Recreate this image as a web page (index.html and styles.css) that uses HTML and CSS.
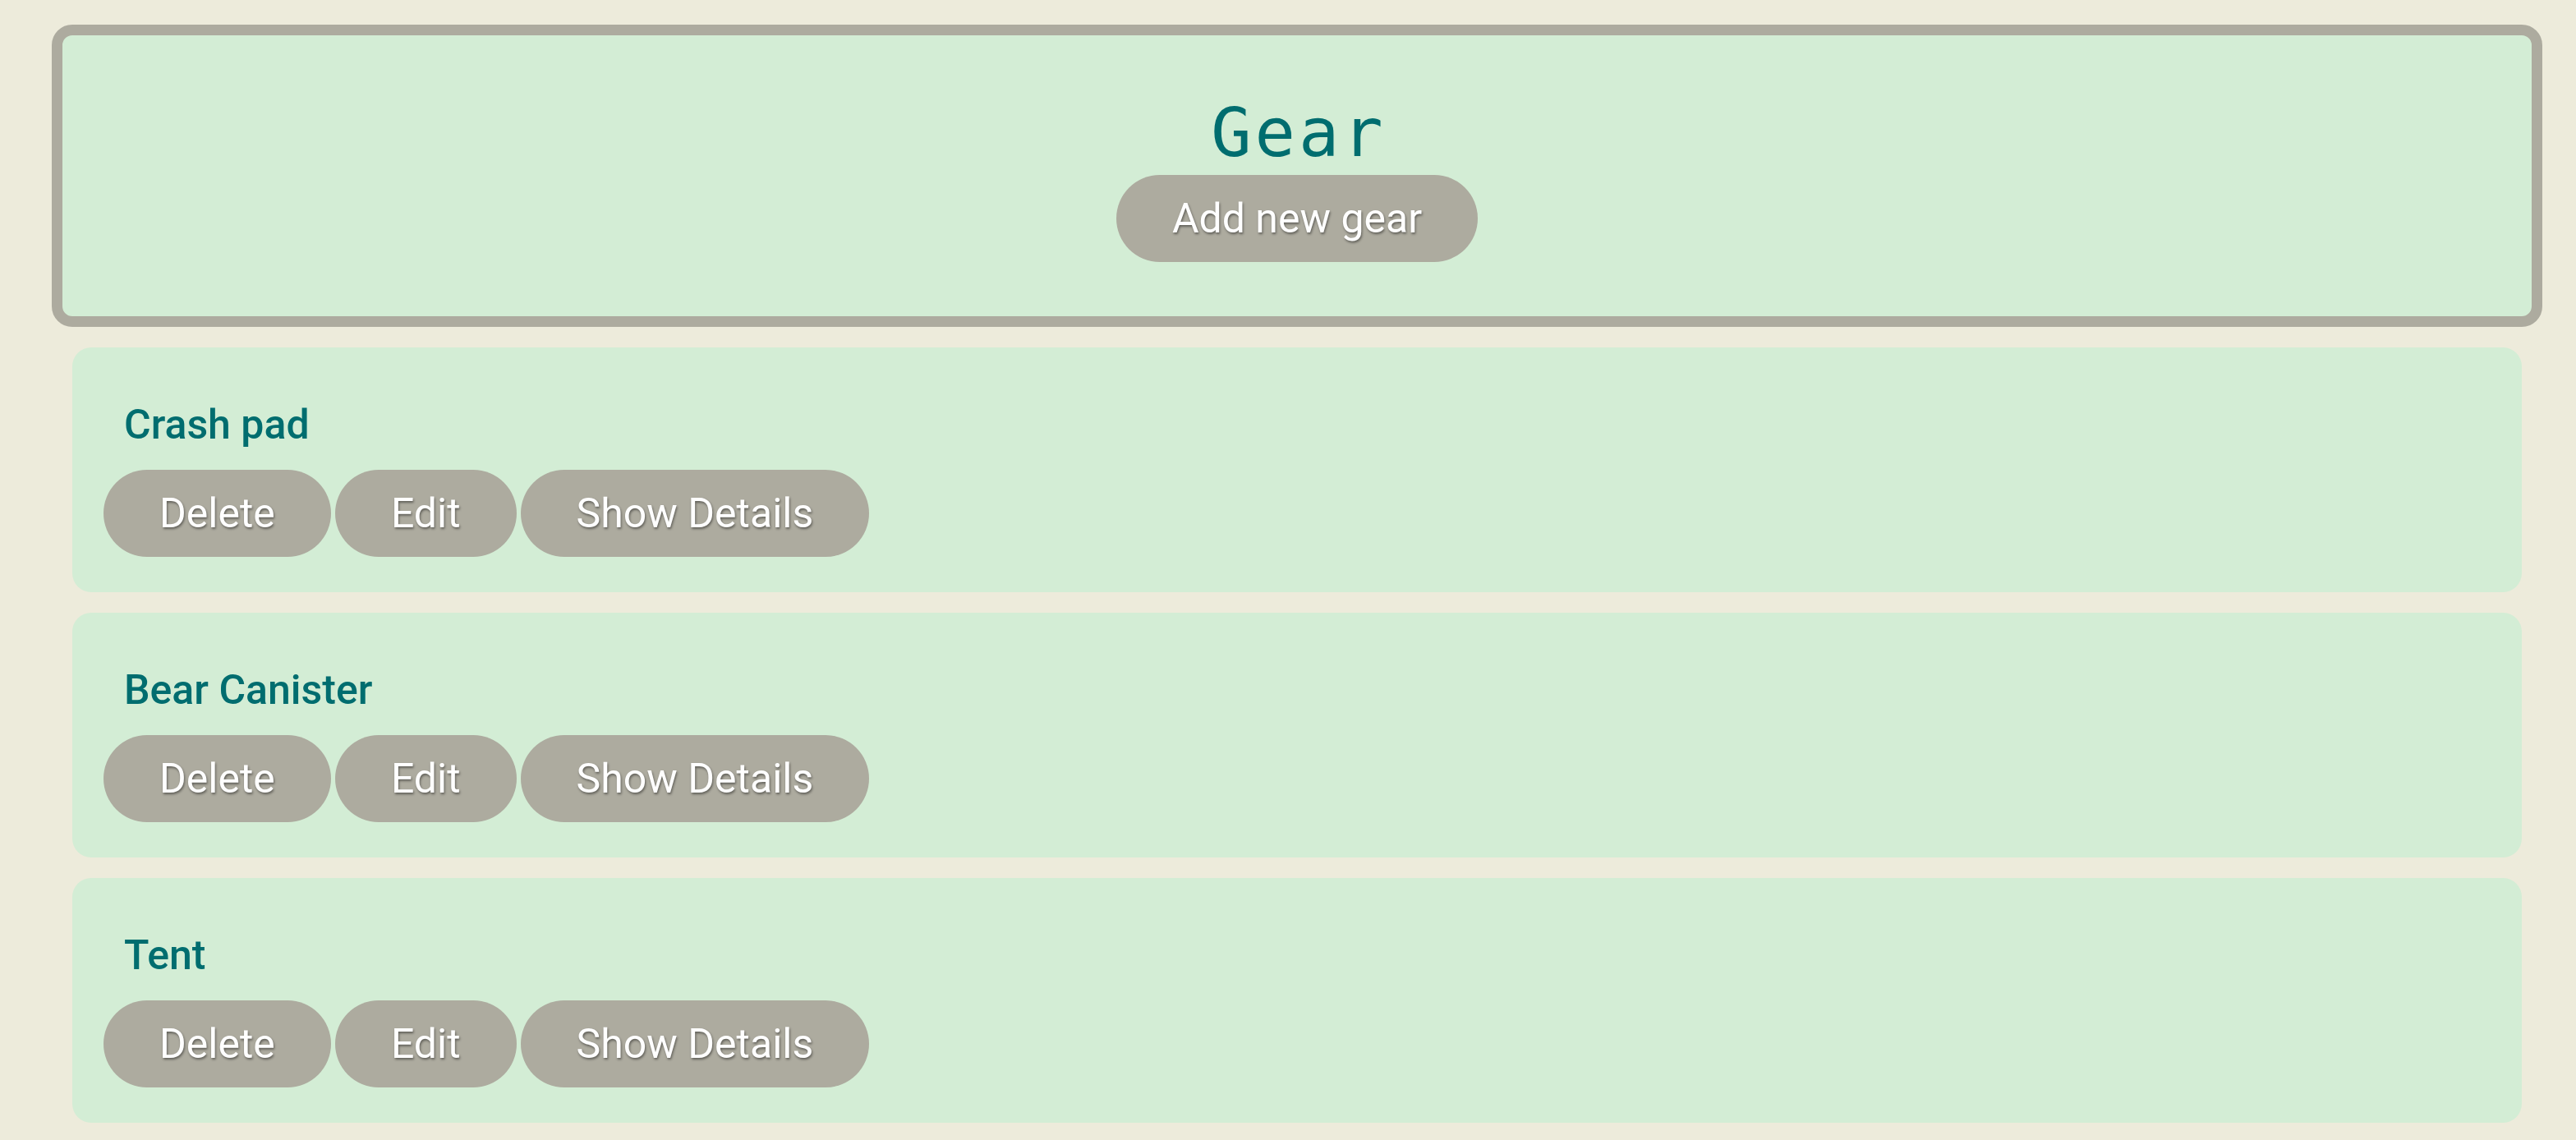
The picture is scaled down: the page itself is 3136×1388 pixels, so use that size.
FILE: index.html
```html
<!DOCTYPE html>
<html lang="en">
<head>
<meta charset="utf-8">
<title>Gear</title>
<link rel="stylesheet" href="styles.css">
</head>
<body>
<div class="page">
  <header class="header">
    <h1 class="title">Gear</h1>
    <button class="btn">Add new gear</button>
  </header>
  <main class="list">
    <section class="card">
      <h2 class="card-title">Crash pad</h2>
      <div class="actions">
        <button class="btn">Delete</button>
        <button class="btn">Edit</button>
        <button class="btn">Show Details</button>
      </div>
    </section>
    <section class="card">
      <h2 class="card-title">Bear Canister</h2>
      <div class="actions">
        <button class="btn">Delete</button>
        <button class="btn">Edit</button>
        <button class="btn">Show Details</button>
      </div>
    </section>
    <section class="card">
      <h2 class="card-title">Tent</h2>
      <div class="actions">
        <button class="btn">Delete</button>
        <button class="btn">Edit</button>
        <button class="btn">Show Details</button>
      </div>
    </section>
  </main>
</div>
</body>
</html>
```
FILE: styles.css
```css
html, body {
  margin: 0;
  padding: 0;
  background: #edebdb;
}

body {
  font-family: Roboto, "Liberation Sans", sans-serif;
}

.page {
  padding: 30px 41px 21px 63px;
}

.header {
  border: 13px solid #adab9f;
  border-radius: 25px;
  background: #d3edd5;
  padding: 71px 0 66px;
  display: flex;
  flex-direction: column;
  align-items: center;
}

.title {
  margin: 0 0 4px;
  padding-left: 4px;
  font-family: "DejaVu Sans Mono", monospace;
  font-weight: 400;
  font-size: 82px;
  letter-spacing: 4px;
  line-height: normal;
  color: #006d6f;
}

.btn {
  font-family: Roboto, "Liberation Sans", sans-serif;
  font-size: 50px;
  font-weight: 400;
  line-height: 56px;
  color: #ffffff;
  background: #adab9f;
  border: none;
  border-radius: 60px;
  padding: 25px 68px;
  margin: 0;
  text-shadow: 1px 2px 3px rgba(0, 0, 0, 0.45);
  cursor: pointer;
}

.list {
  margin: 25px 25px 0;
  display: flex;
  flex-direction: column;
  gap: 25px;
}

.card {
  background: #d3edd5;
  border-radius: 23px;
  padding: 66px 38px 43px;
}

.card-title {
  margin: 0 0 27px 25px;
  font-size: 50px;
  font-weight: 500;
  line-height: 56px;
  color: #006d6f;
}

.actions {
  display: flex;
  gap: 5px;
}
```
